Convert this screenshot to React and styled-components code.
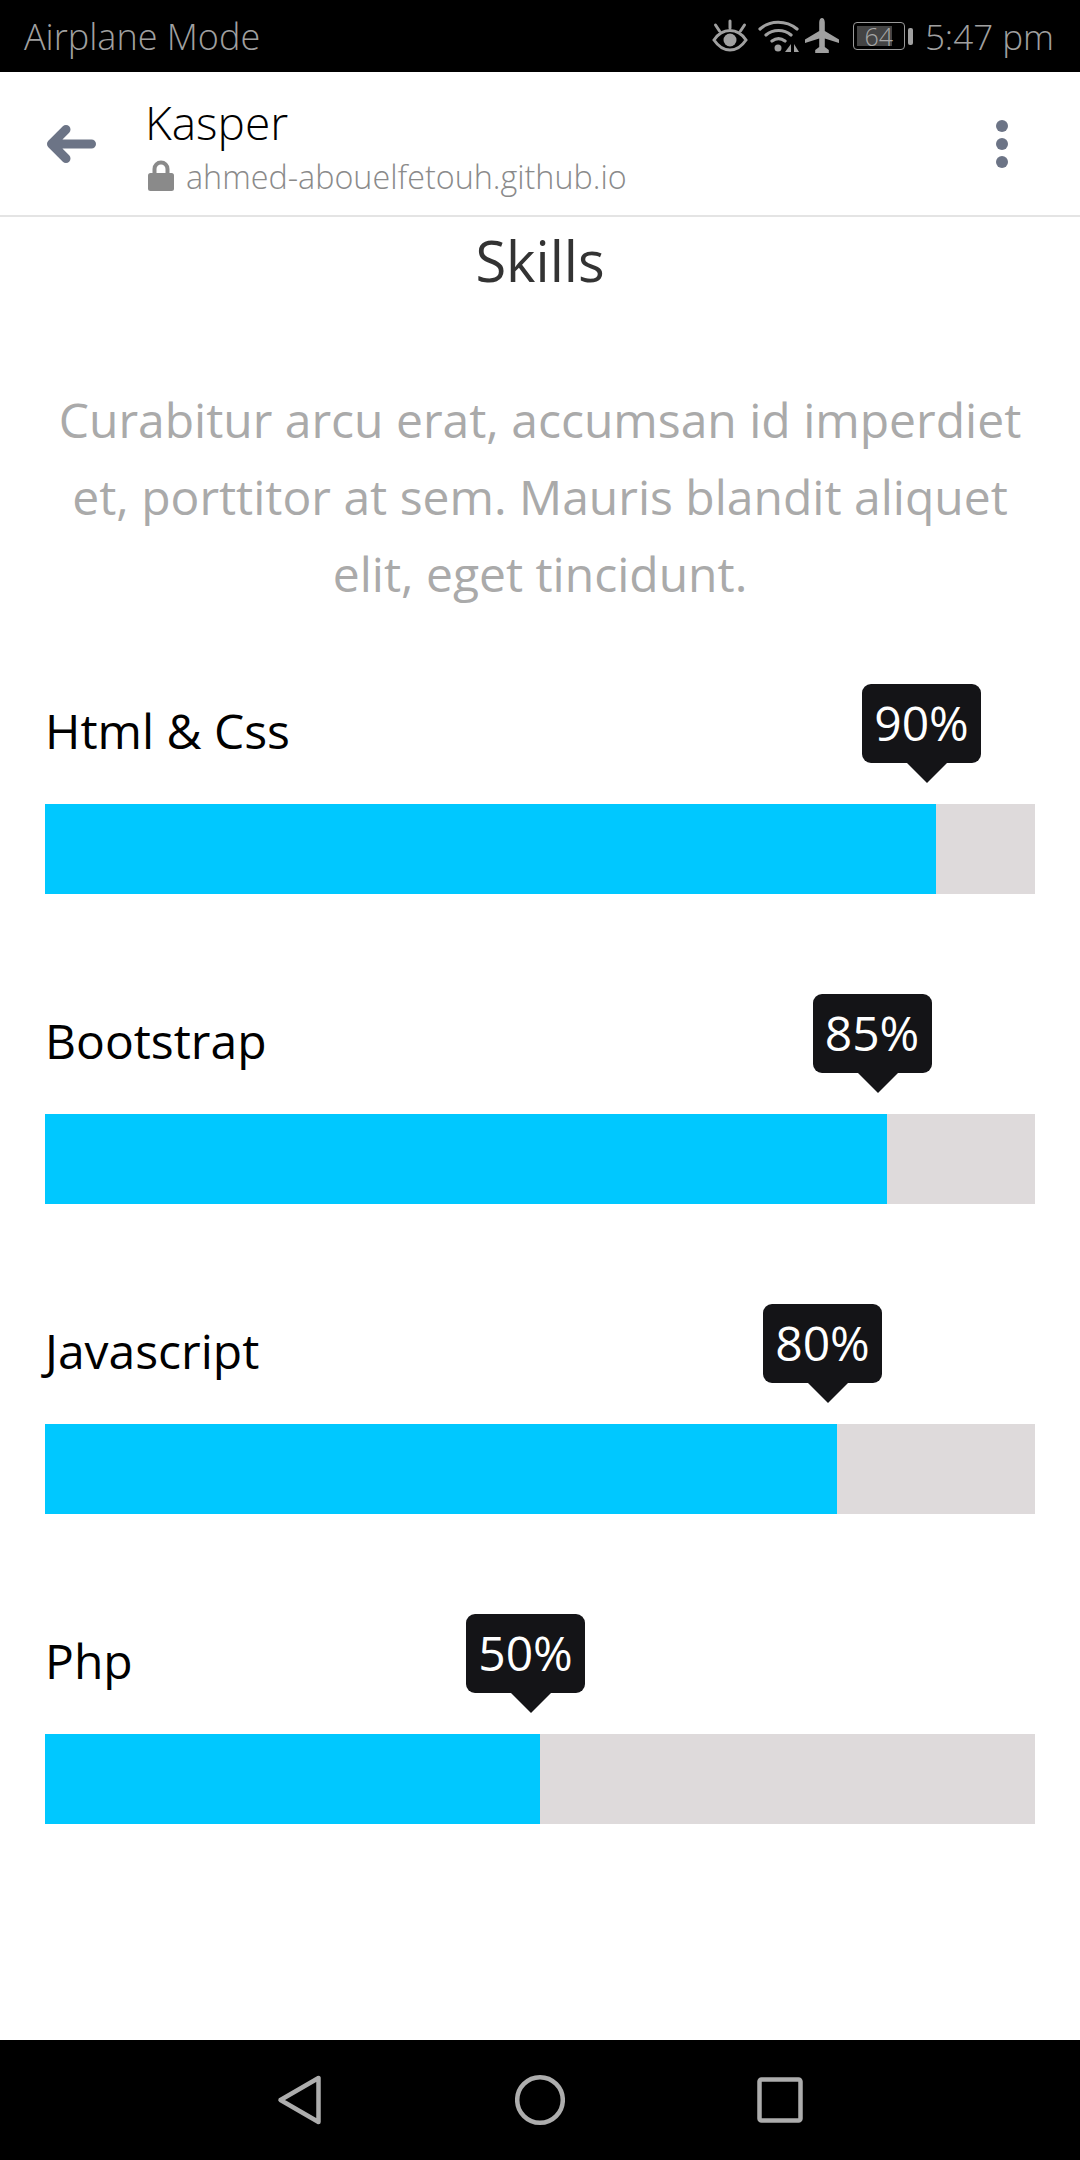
import React from 'react';
import styled, { createGlobalStyle } from 'styled-components';

const GlobalStyle = createGlobalStyle`
  html, body {
    margin: 0;
    padding: 0;
    background: #fff;
    font-family: "Open Sans", "Noto Sans", sans-serif;
  }
`;

const Page = styled.div`
  width: 1080px;
  height: 2160px;
  display: flex;
  flex-direction: column;
  overflow: hidden;
`;

const StatusBar = styled.div`
  height: 72px;
  flex: none;
  background: #000;
  color: #a0a0a0;
  display: flex;
  align-items: center;
  justify-content: space-between;
  padding: 0 26px 0 24px;
  font-size: 36px;
  font-weight: 300;
`;

const StatusRight = styled.div`
  display: flex;
  align-items: center;
`;

const StatusIcon = styled.svg`
  flex: none;
  margin-left: ${(p) => p.$gap || 0}px;
`;

const StatusTime = styled.span`
  margin-left: 12px;
  font-size: 35px;
`;

const BatteryBox = styled.div`
  position: relative;
  width: 50px;
  height: 26px;
  margin-left: 14px;
  border: 1.5px solid #9a9a9a;
  border-radius: 4px;
  display: flex;
  align-items: center;
  justify-content: center;
  font-size: 25px;
  color: #a8a8a8;
  box-sizing: content-box;
`;

const BatteryLevel = styled.div`
  position: absolute;
  left: 3px;
  top: 3px;
  bottom: 3px;
  width: 70%;
  background: #444;
`;

const BatteryText = styled.span`
  position: relative;
`;

const BatteryCap = styled.div`
  width: 5px;
  height: 17px;
  margin-left: 3px;
  background: #a0a0a0;
  border-radius: 2px;
`;

const Header = styled.header`
  height: 145px;
  flex: none;
  box-sizing: border-box;
  border-bottom: 2px solid #e4e4e4;
  display: flex;
  align-items: center;
  padding: 0 72px 0 46px;
`;

const BackButton = styled.svg`
  width: 50px;
  height: 42px;
  flex: none;
`;

const Titles = styled.div`
  flex: 1;
  margin-left: 49px;
  display: flex;
  flex-direction: column;
`;

const Title = styled.div`
  font-size: 46px;
  font-weight: 300;
  line-height: 60px;
  color: #000;
`;

const Url = styled.div`
  display: flex;
  align-items: center;
  margin-top: 4px;
  font-size: 32.3px;
  font-weight: 300;
  line-height: 40px;
  color: #8a8a8a;
`;

const LockIcon = styled.svg`
  width: 28px;
  height: 32px;
  margin: 0 11px 0 2px;
  flex: none;
`;

const Dots = styled.div`
  display: flex;
  flex-direction: column;
  gap: 6px;
`;

const Dot = styled.span`
  width: 12px;
  height: 12px;
  border-radius: 50%;
  background: #6c7486;
`;

const Content = styled.main`
  flex: 1;
  padding: 0 45px;
  display: flex;
  flex-direction: column;
`;

const Heading = styled.h2`
  margin: 0;
  padding-top: 10px;
  height: 66px;
  text-align: center;
  font-size: 56px;
  font-weight: 400;
  line-height: 66px;
  color: #333;
`;

const Intro = styled.p`
  margin: 88px 0 0;
  text-align: center;
  font-size: 48px;
  line-height: 77px;
  color: #aaa;
`;

const SkillList = styled.div`
  margin-top: 62px;
  display: flex;
  flex-direction: column;
  gap: 90px;
`;

const Skill = styled.div`
  display: flex;
  flex-direction: column;
`;

const SkillName = styled.div`
  height: 130px;
  padding-top: 25px;
  box-sizing: border-box;
  font-size: 48px;
  line-height: 64px;
  color: #000;
`;

const Track = styled.div`
  height: 90px;
  background: #dedadb;
`;

const Fill = styled.div`
  position: relative;
  height: 100%;
  background: #00c8ff;
`;

const Bubble = styled.div`
  position: absolute;
  right: -45px;
  top: -120px;
  width: 119px;
  height: 79px;
  box-sizing: border-box;
  background: #141417;
  border-radius: 9px;
  color: #fff;
  font-size: 48px;
  line-height: 77px;
  text-align: center;

  &::after {
    content: "";
    position: absolute;
    right: 34px;
    bottom: -20px;
    border-style: solid;
    border-width: 20px 20px 0;
    border-color: #141417 transparent transparent;
  }
`;

const NavBar = styled.nav`
  height: 120px;
  flex: none;
  background: #000;
  display: flex;
  align-items: center;
  justify-content: center;
  gap: 190px;
`;

const NavIcon = styled.svg`
  width: 50px;
  height: 60px;
`;

const skills = [
  { name: 'Html & Css', value: 90 },
  { name: 'Bootstrap', value: 85 },
  { name: 'Javascript', value: 80 },
  { name: 'Php', value: 50 },
];

function EyeIcon() {
  return (
    <StatusIcon width="38" height="34" viewBox="0 0 38 34" fill="none">
      <path d="M3 21C8 13.500 13 11.500 19 11.500s11 2 16 9.500C30 28.500 25 31 19 31S8 28.500 3 21Z" stroke="#a0a0a0" strokeWidth="3" />
      <circle cx="19" cy="21" r="6.500" fill="#a0a0a0" />
      <path d="M19 2v7M4.500 6l4 6M33.500 6l-4 6" stroke="#a0a0a0" strokeWidth="3" strokeLinecap="round" />
    </StatusIcon>
  );
}

function WifiIcon() {
  return (
    <StatusIcon $gap={9} width="42" height="34" viewBox="0 0 42 34" fill="none">
      <path d="M2 10C12 1 28 1 39 10M8 16c7-6 18-6 25 0M14 22c4-3 9-3 13 0" stroke="#a0a0a0" strokeWidth="3.200" strokeLinecap="round" />
      <circle cx="20" cy="29" r="3.500" fill="#a0a0a0" />
      <path d="M33 25v8h-6ZM36 25v8h5Z" fill="#a0a0a0" />
    </StatusIcon>
  );
}

function PlaneIcon() {
  return (
    <StatusIcon $gap={5} width="34" height="36" viewBox="0 0 34 36">
      <path d="M17 0c1.600 0 2.800 2 2.800 4.500V13L34 21.500V25l-14.200-4.500V29l4 3v3H10.200v-3l4-3v-8.500L0 25v-3.500L14.200 13V4.500C14.200 2 15.400 0 17 0Z" fill="#a0a0a0" />
    </StatusIcon>
  );
}

function SkillRow({ name, value }) {
  return (
    <Skill>
      <SkillName>{name}</SkillName>
      <Track>
        <Fill style={{ width: `${value}%` }}>
          <Bubble>{value}%</Bubble>
        </Fill>
      </Track>
    </Skill>
  );
}

export default function App() {
  return (
    <Page>
      <GlobalStyle />
      <StatusBar>
        <span>Airplane Mode</span>
        <StatusRight>
          <EyeIcon />
          <WifiIcon />
          <PlaneIcon />
          <BatteryBox>
            <BatteryLevel />
            <BatteryText>64</BatteryText>
          </BatteryBox>
          <BatteryCap />
          <StatusTime>5:47 pm</StatusTime>
        </StatusRight>
      </StatusBar>
      <Header>
        <BackButton viewBox="0 0 50 42" fill="none">
          <path d="M45.500 21H6M20 6.500 5.500 21 20 35.500" stroke="#6c7486" strokeWidth="9" strokeLinecap="round" strokeLinejoin="round" />
        </BackButton>
        <Titles>
          <Title>Kasper</Title>
          <Url>
            <LockIcon viewBox="0 0 28 32">
              <path d="M7.500 14V9a6.500 6.500 0 0 1 13 0v5" fill="none" stroke="#8a8a8a" strokeWidth="4" />
              <rect x="1" y="13" width="26" height="18" rx="2.500" fill="#8a8a8a" />
            </LockIcon>
            ahmed-abouelfetouh.github.io
          </Url>
        </Titles>
        <Dots>
          <Dot />
          <Dot />
          <Dot />
        </Dots>
      </Header>
      <Content>
        <Heading>Skills</Heading>
        <Intro>Curabitur arcu erat, accumsan id imperdiet et, porttitor at sem. Mauris blandit aliquet elit, eget tincidunt.</Intro>
        <SkillList>
          {skills.map((skill) => (
            <SkillRow key={skill.name} {...skill} />
          ))}
        </SkillList>
      </Content>
      <NavBar>
        <NavIcon viewBox="0 0 50 60" fill="none">
          <path d="M43.500 8v44L5.500 30Z" stroke="#adadad" strokeWidth="4.500" strokeLinejoin="round" />
        </NavIcon>
        <NavIcon viewBox="0 0 50 60" fill="none">
          <circle cx="25" cy="30" r="22.800" stroke="#adadad" strokeWidth="4.500" />
        </NavIcon>
        <NavIcon viewBox="0 0 50 60" fill="none">
          <rect x="4.500" y="9.500" width="41" height="41" rx="2" stroke="#adadad" strokeWidth="4.500" />
        </NavIcon>
      </NavBar>
    </Page>
  );
}
